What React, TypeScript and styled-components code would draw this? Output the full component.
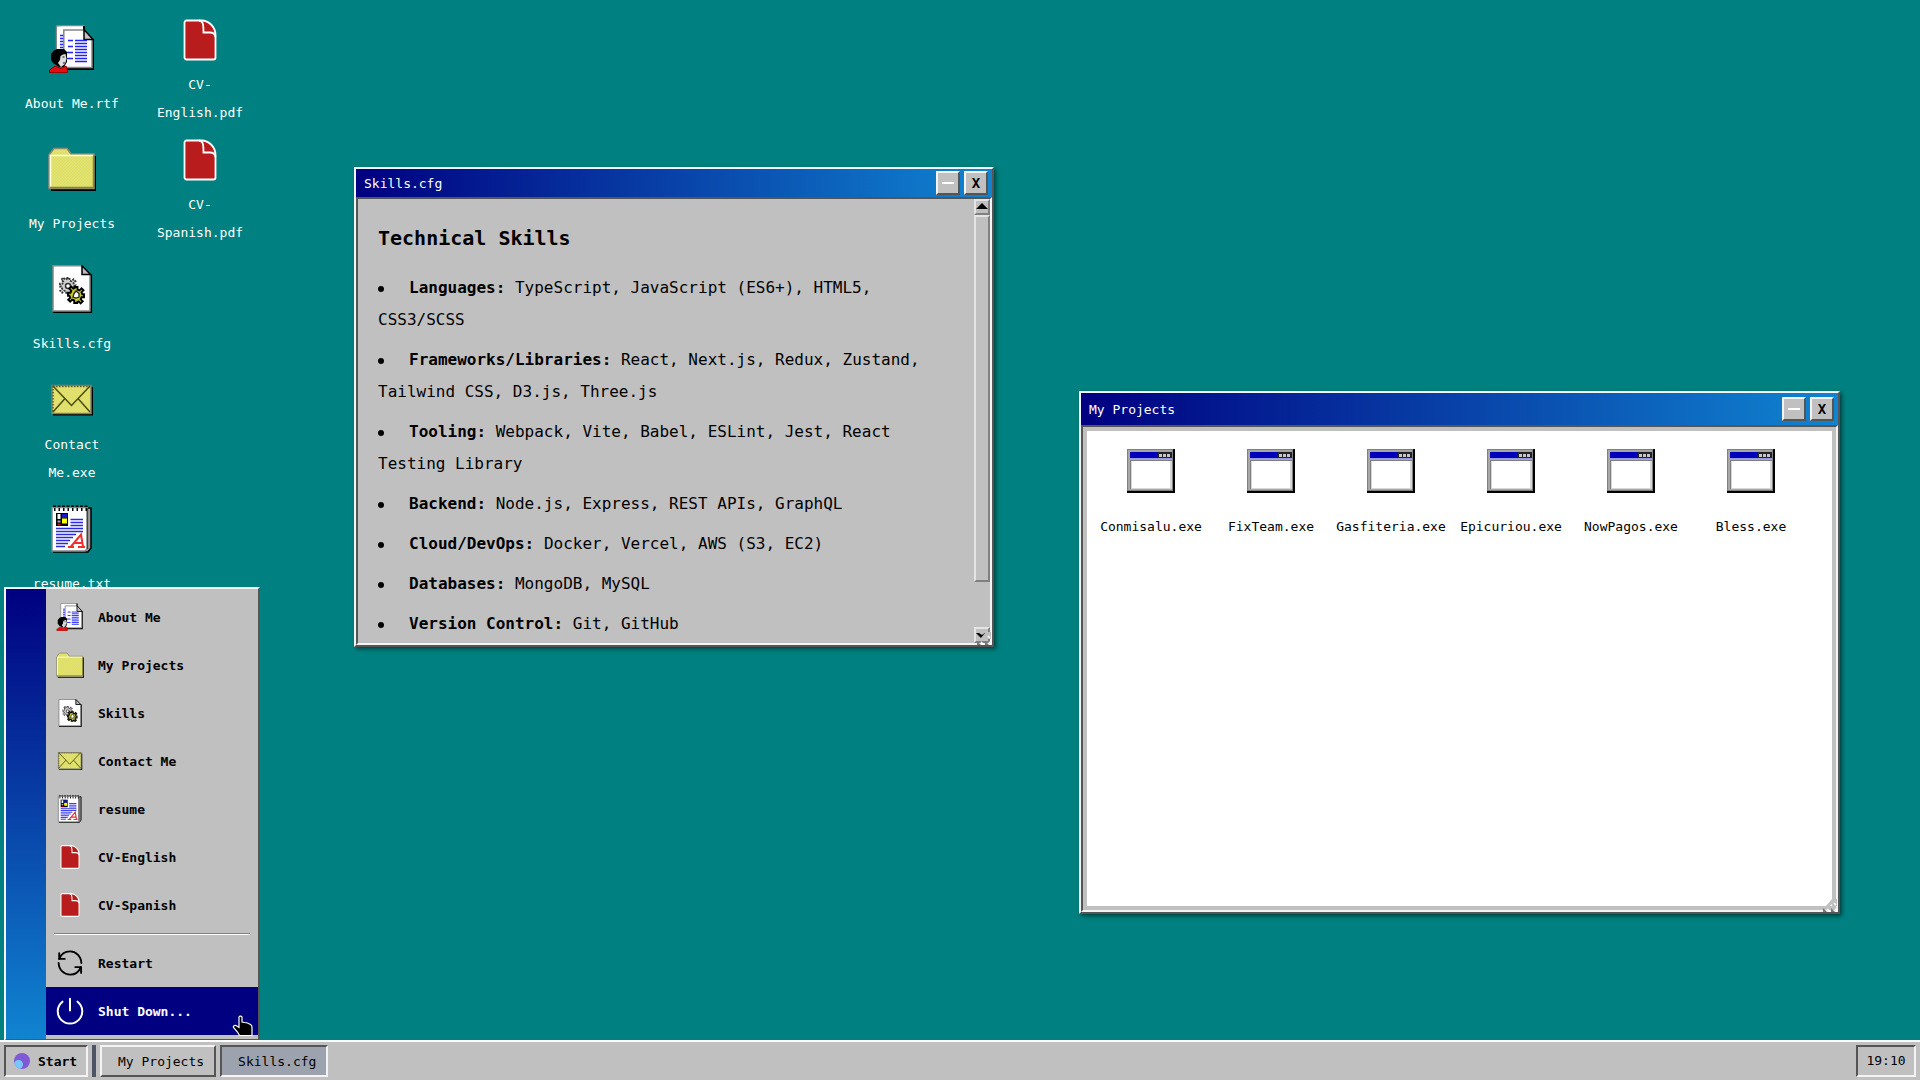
import React from "react";
import styled, { createGlobalStyle, css } from "styled-components";

const FONT = '"DejaVu Sans Mono", "Liberation Mono", monospace';

const GlobalStyle = createGlobalStyle`
  * { box-sizing: border-box; }
  body {
    margin: 0;
    overflow: hidden;
    background: #008080;
    font-family: ${FONT};
    color: #000;
  }
  button { font-family: inherit; color: inherit; margin: 0; padding: 0; }
  h1, h2, p, ul { margin: 0; padding: 0; }
`;

const raised = css`
  border: 2px solid;
  border-color: #f4f4f4 #555 #555 #f4f4f4;
`;

const sunken = css`
  border: 2px solid;
  border-color: #555 #f4f4f4 #f4f4f4 #555;
`;

/* ---------- icons ---------- */

type IconProps = { size: number };

const Svg = ({ size, children }: IconProps & { children: React.ReactNode }) => (
  <svg width={size} height={size} viewBox="0 0 48 48" aria-hidden="true">
    {children}
  </svg>
);

const Dither = ({ id }: { id: string }) => (
  <pattern id={id} width="3" height="3" patternUnits="userSpaceOnUse">
    <rect width="3" height="3" fill="#dede58" />
    <rect width="1.5" height="1.5" fill="#e2e280" />
    <rect x="1.5" y="1.5" width="1.5" height="1.5" fill="#e2e280" />
  </pattern>
);

const AboutIcon = ({ size }: IconProps) => (
  <Svg size={size}>
    <path d="M8.5 .8H36V6M8.5 .8V30" fill="#fff" stroke="#868686" strokeWidth="1.5" />
    <path d="M9 1.5H36V30H9z" fill="#fff" />
    <path d="M36 1V6" stroke="#000" strokeWidth="2" />
    <path d="M12 10.5h4M12 13.5h4M12 16.5h4M12 19.5h4M12 22.5h4" stroke="#22f" strokeWidth="1.5" />
    <path d="M18 44H45V14" fill="none" stroke="#000" strokeWidth="2" />
    <path d="M15.8 43V5H36L44 13.500V42.500H16z" fill="#fff" stroke="#868686" strokeWidth="1.5" />
    <path d="M36 4.500L45 14.500H36z" fill="#c4c4c4" stroke="#000" strokeWidth="1.5" />
    <path d="M20 15.500h5M20 21.500h5M19 27.500h6M19 33.500h6M27 15.500H39M27 18.500H39M27 21.500H39M27 24.500H39M27 27.500H39M27 30.500H39M27 33.500H39M27 36.500H39" stroke="#22f" strokeWidth="1.6" />
    <path d="M6 25.500L9 24H16L19 27V37L16 42H11L5 38L3 35V29z" fill="#000" />
    <path d="M12.500 31L15 29.500L17.500 29L18.500 34L17 39L13 42L10 38L12 35z" fill="#ddd" />
    <path d="M14.500 32h2M15 38h2" stroke="#555" strokeWidth="1.5" />
    <path d="M1.500 47.500V45L7 41L13 43.500L18 41L19.500 45V47.500z" fill="#e80c0c" stroke="#900" strokeWidth="1" />
  </Svg>
);

const FolderIcon = ({ size }: IconProps) => (
  <Svg size={size}>
    <defs><Dither id={`folder-${size}`} /></defs>
    <path d="M3 45H47V11" fill="none" stroke="#000" strokeWidth="2" />
    <path d="M1 43.500V10L6 3.500H19L23 9H46V43.500z" fill={`url(#folder-${size})`} stroke="#8b8b78" strokeWidth="1.500" />
    <path d="M2.500 42V10.500H45" fill="none" stroke="#ffffe0" strokeWidth="1.500" />
    <path d="M2 42.500H45.500V11" fill="none" stroke="#88882c" strokeWidth="1.500" />
  </Svg>
);

const GEAR = "M-1.500-8h3v2.500l2 .8 2-2 2 2-2 2 .8 2H8v3H5.500l-.8 2 2 2-2 2-2-2-1.500.8V8h-3V5.500l-2-.8-2 2-2-2 2-2-.8-2H-8v-3h2.500l.8-2-2-2 2-2 2 2 1.500-.8z";

const SkillsIcon = ({ size }: IconProps) => (
  <Svg size={size}>
    <path d="M5 47H43V9" fill="none" stroke="#000" strokeWidth="2.200" />
    <path d="M5 .8H34L42 9V46H5z" fill="#fff" stroke="#868686" strokeWidth="1.500" />
    <path d="M34 .8L42.500 9.500H34z" fill="#bbb" stroke="#000" strokeWidth="1.500" />
    <g transform="translate(20 21)">
      <path d={GEAR} fill="#d0d0d0" stroke="#333" strokeWidth="1.800" strokeDasharray="2 1" />
      <circle r="2.500" fill="#fff" stroke="#333" strokeWidth="1.500" />
    </g>
    <g transform="translate(28 30)">
      <path d={GEAR} fill="#c8c824" stroke="#000" strokeWidth="1.900" />
      <path d="M-2-1.500L0-4L3-1.500V2L0 3L-3 2z" fill="#fff" stroke="#222" strokeWidth="1.300" />
    </g>
  </Svg>
);

const MailIcon = ({ size }: IconProps) => (
  <Svg size={size}>
    <defs><Dither id={`mail-${size}`} /></defs>
    <path d="M5 39.500H45V11H42V38H5z" fill="#000" />
    <rect x="4" y="9.500" width="39" height="28" fill={`url(#mail-${size})`} stroke="#80806c" strokeWidth="1.500" />
    <path d="M5 10.500H42M5 10V36" fill="none" stroke="#57572a" strokeWidth="1.500" strokeDasharray="1.500 1.500" />
    <path d="M5 10L23.500 29.500L42 10M5 36L17 22.500M30 22.500L42 36" fill="none" stroke="#4c4c10" strokeWidth="1.500" />
  </Svg>
);

const ResumeIcon = ({ size }: IconProps) => (
  <Svg size={size}>
    <path d="M5 47H40L43 43V3H40" fill="#9a9a9a" stroke="#000" strokeWidth="1.500" />
    <path d="M4 2.500H39V44L37 46H4z" fill="#fff" stroke="#868686" strokeWidth="1.500" />
    <path d="M39.500 3V44" stroke="#444" strokeWidth="1.200" />
    <path d="M5 1.200H41" stroke="#000" strokeWidth="1.400" strokeDasharray="3 1.500" />
    <path d="M6 4.500H39" stroke="#000" strokeWidth="3" strokeDasharray="1.500 3" />
    <rect x="8" y="8" width="12" height="13" fill="#000" />
    <path d="M9.500 9h3v5h-3z" fill="#fff" />
    <path d="M14 9h5v4h-5z" fill="#1818c0" />
    <path d="M14 13.500h5v5h-5z" fill="#ff0" />
    <path d="M9.500 15.500h3v2h-3z" fill="#aaa" />
    <path d="M9.500 18.500h3v1.500h-3z" fill="#e01010" />
    <path d="M22.500 14.500H35M22.500 17.500H35M22.500 20.500H35M8 23.500H35M8 26.500H35M8 29.500H28M8 32.500H25M8 35.500H22M8 38.500H20M8 41.500H17" stroke="#2a2ae0" strokeWidth="1.600" />
    <path d="M20 42H26M30 42H37M23 41.500L33 29.500L35 41.500M25.500 38H34" fill="none" stroke="#f03030" strokeWidth="2" />
  </Svg>
);

const PdfIcon = ({ size }: IconProps) => (
  <Svg size={size}>
    <path d="M10.500 4.500H25.500C33 4.500 39.500 11 39.500 19V41.500a2 2 0 0 1-2 2H10.500a2 2 0 0 1-2-2V6.500a2 2 0 0 1 2-2z" fill="#b91c1c" stroke="#fff" strokeWidth="1.800" />
    <path d="M23 4.500C27 5 27.500 8 27.500 16.500H34C37.500 16.500 39 18 39.500 21" fill="none" stroke="#fff" strokeWidth="1.800" />
  </Svg>
);

const WindowIcon = ({ size }: IconProps) => (
  <Svg size={size}>
    <rect x="0" y="1" width="48" height="44" fill="#000" />
    <rect x="0" y="1" width="46" height="42" fill="#808080" />
    <rect x="1" y="2" width="44" height="40" fill="#a8a8a8" />
    <rect x="3" y="3" width="42" height="8" fill="#9a9ae0" />
    <rect x="3" y="4" width="42" height="6" fill="#0000b8" />
    <rect x="31" y="4" width="14" height="6" fill="#222" />
    <path d="M32 6h3v3h-3zM36 6h3v3h-3zM40 6h3v3h-3z" fill="#c8c8c8" />
    <rect x="3" y="12" width="42" height="29" fill="#808080" />
    <rect x="4" y="13" width="41" height="28" fill="#d8d8d8" />
    <rect x="5" y="13" width="38" height="27" fill="#fff" />
  </Svg>
);

const RestartIcon = ({ size }: IconProps) => (
  <Svg size={size}>
    <g fill="none" stroke="currentColor" strokeWidth="3.200" strokeLinecap="round" strokeLinejoin="round">
      <path d="M5.500 17C9 8 16 4 24 4C34 4 43 12 43.500 24" />
      <path d="M4.500 24C5 36 14 44 24 44C32 44 39 40 42.500 31" />
      <path d="M5.500 7V17H15M43 41V31H33" />
    </g>
  </Svg>
);

const PowerIcon = ({ size }: IconProps) => (
  <Svg size={size}>
    <g fill="none" stroke="currentColor" strokeWidth="3.400" strokeLinecap="round">
      <path d="M24 3V23" />
      <path d="M11 8A21 21 0 1 0 37 8" />
    </g>
  </Svg>
);

const HandCursor = () => (
  <svg width="22" height="22" viewBox="0 0 22 22" aria-hidden="true">
    <path d="M7 2C7.500 .8 9.500 .8 10 2V7L12.500 7.500L15.500 8L18.500 9.500C19.500 10 20 11 20 12.500V20.500H7.500L5.500 17L1.500 12.500C1 11 2.500 10 4 10.500L7 12.500z" fill="#000" stroke="#fff" strokeWidth="1.200" />
  </svg>
);

/* ---------- desktop ---------- */

const Screen = styled.div`
  height: 100vh;
  display: flex;
  flex-direction: column;
`;

const Desktop = styled.main`
  position: relative;
  flex: 1;
  min-height: 0;
`;

const IconGrid = styled.div`
  display: grid;
  grid-auto-flow: column;
  grid-template-rows: repeat(5, 120px);
  grid-auto-columns: 128px;
  padding: 8px;
`;

const Tile = styled.button<{ $dark?: boolean }>`
  width: ${(p) => (p.$dark ? 120 : 128)}px;
  height: 127px;
  display: flex;
  flex-direction: column;
  align-items: center;
  justify-content: space-evenly;
  border: 0;
  background: none;
  color: ${(p) => (p.$dark ? "#000" : "#fff")};
  font-size: 13px;
  line-height: 28px;
`;

const TileLabel = styled.span<{ $wide?: boolean }>`
  max-width: ${(p) => (p.$wide ? "none" : "104px")};
  text-align: center;
`;

/* ---------- windows ---------- */

const WindowFrame = styled.section<{ $x: number; $y: number; $w: number; $h: number }>`
  position: absolute;
  left: ${(p) => p.$x}px;
  top: ${(p) => p.$y}px;
  width: ${(p) => p.$w}px;
  height: ${(p) => p.$h}px;
  display: flex;
  flex-direction: column;
  background: #c0c0c0;
  box-shadow: 2px 2px 4px rgba(0, 0, 0, 0.5);
  ${raised}
`;

const TitleBar = styled.header<{ $tall?: boolean }>`
  flex: none;
  height: ${(p) => (p.$tall ? 32 : 28)}px;
  display: flex;
  align-items: center;
  gap: 4px;
  padding: 0 4px 0 8px;
  background: linear-gradient(90deg, #000080, #1084d0);
  color: #fff;
`;

const Title = styled.h1`
  flex: 1;
  padding-top: 2px;
  font-size: 13px;
  font-weight: 400;
  line-height: 24px;
`;

const ControlButton = styled.button`
  width: 24px;
  height: 24px;
  display: grid;
  place-items: center;
  background: #c0c0c0;
  color: #000;
  font-size: 14px;
  font-weight: 700;
  line-height: 20px;
  ${raised}
`;

const MinimizeBar = styled.span`
  width: 12px;
  height: 2px;
  background: #fff;
`;

const WindowBody = styled.div`
  flex: 1;
  min-height: 0;
  display: flex;
  ${sunken}
`;

const FolderView = styled.div`
  flex: 1;
  margin: 4px;
  padding: 0 4px;
  background: #fff;
  display: flex;
  flex-wrap: wrap;
  align-content: flex-start;
`;

const Document = styled.article`
  flex: 1;
  overflow: hidden;
  padding: 21px 20px;
`;

const Heading = styled.h2`
  margin-bottom: 16px;
  font-size: 20px;
  line-height: 36px;
`;

const SkillList = styled.ul`
  display: flex;
  flex-direction: column;
  gap: 8px;
  list-style: none;
  font-size: 16px;
  line-height: 32px;
`;

const Skill = styled.li`
  &::before {
    content: "";
    display: inline-block;
    width: 6px;
    height: 6px;
    margin-right: 25px;
    border-radius: 50%;
    background: #000;
    vertical-align: middle;
  }
`;

const ScrollBar = styled.div`
  flex: none;
  width: 16px;
  display: flex;
  flex-direction: column;
`;

const ScrollPart = css`
  background: #c0c0c0;
  border: 2px solid;
  border-color: #e4e4e4 #808080 #808080 #e4e4e4;
`;

const ScrollButton = styled.button`
  flex: none;
  height: 16px;
  display: grid;
  place-items: center;
  ${ScrollPart}
`;

const ScrollTrack = styled.div`
  flex: 1;
`;

const ScrollThumb = styled.div`
  height: 89%;
  ${ScrollPart}
`;

const Grip = styled.svg`
  position: absolute;
  right: -1px;
  bottom: 0;
`;

/* ---------- start menu ---------- */

const StartMenu = styled.nav`
  position: absolute;
  left: 4px;
  bottom: -1px;
  width: 256px;
  display: flex;
  background: #c0c0c0;
  ${raised}
`;

const MenuStripe = styled.div`
  width: 40px;
  background: linear-gradient(180deg, #000080, #1084d0);
`;

const MenuItems = styled.div`
  flex: 1;
  display: flex;
  flex-direction: column;
  padding: 4px 0;
`;

const MenuItem = styled.button<{ $active?: boolean }>`
  height: 48px;
  display: flex;
  align-items: center;
  gap: 14px;
  padding: 0 10px;
  border: 0;
  background: ${(p) => (p.$active ? "#000080" : "none")};
  color: ${(p) => (p.$active ? "#fff" : "#000")};
  font-size: 13px;
  font-weight: 700;
`;

const MenuDivider = styled.hr`
  width: 196px;
  height: 2px;
  margin: 4px 8px;
  border: 0;
  border-top: 1px solid #808080;
  border-bottom: 1px solid #fff;
`;

const Pointer = styled.div`
  position: absolute;
  right: 4px;
  bottom: 2px;
  height: 22px;
`;

/* ---------- taskbar ---------- */

const TaskBar = styled.footer`
  position: relative;
  flex: none;
  height: 40px;
  display: flex;
  align-items: center;
  gap: 4px;
  padding: 0 4px;
  background: #c0c0c0;
  border-top: 2px solid #fff;
  font-size: 13px;
`;

const StartButton = styled.button`
  width: 84px;
  height: 32px;
  display: flex;
  align-items: center;
  gap: 8px;
  padding: 0 8px;
  background: #c0c0c0;
  font-size: 13px;
  font-weight: 700;
  ${sunken}
`;

const TaskDivider = styled.div`
  width: 4px;
  height: 32px;
  background: #4b5563;
`;

const TaskButton = styled.button<{ $active?: boolean }>`
  height: 32px;
  padding: 0 10px 0 16px;
  font-size: 13px;
  background: ${(p) => (p.$active ? "#9ca3af" : "#c0c0c0")};
  ${(p) => (p.$active ? sunken : raised)}
`;

const Clock = styled.time`
  height: 32px;
  width: 60px;
  margin-left: auto;
  line-height: 28px;
  text-align: center;
  ${sunken}
`;

/* ---------- data ---------- */

type Entry = { label: string; Icon: React.FC<IconProps> };

const desktopItems: Entry[] = [
  { label: "About Me.rtf", Icon: AboutIcon },
  { label: "My Projects", Icon: FolderIcon },
  { label: "Skills.cfg", Icon: SkillsIcon },
  { label: "Contact Me.exe", Icon: MailIcon },
  { label: "resume.txt", Icon: ResumeIcon },
  { label: "CV-English.pdf", Icon: PdfIcon },
  { label: "CV-Spanish.pdf", Icon: PdfIcon },
];

const menuItems: Entry[] = [
  { label: "About Me", Icon: AboutIcon },
  { label: "My Projects", Icon: FolderIcon },
  { label: "Skills", Icon: SkillsIcon },
  { label: "Contact Me", Icon: MailIcon },
  { label: "resume", Icon: ResumeIcon },
  { label: "CV-English", Icon: PdfIcon },
  { label: "CV-Spanish", Icon: PdfIcon },
];

const projects = [
  "Conmisalu.exe",
  "FixTeam.exe",
  "Gasfiteria.exe",
  "Epicuriou.exe",
  "NowPagos.exe",
  "Bless.exe",
];

const skills = [
  ["Languages:", "TypeScript, JavaScript (ES6+), HTML5, CSS3/SCSS"],
  ["Frameworks/Libraries:", "React, Next.js, Redux, Zustand, Tailwind CSS, D3.js, Three.js"],
  ["Tooling:", "Webpack, Vite, Babel, ESLint, Jest, React Testing Library"],
  ["Backend:", "Node.js, Express, REST APIs, GraphQL"],
  ["Cloud/DevOps:", "Docker, Vercel, AWS (S3, EC2)"],
  ["Databases:", "MongoDB, MySQL"],
  ["Version Control:", "Git, GitHub"],
];

type WindowProps = {
  title: string;
  x: number;
  y: number;
  w: number;
  h: number;
  tall?: boolean;
  children: React.ReactNode;
};

const AppWindow = ({ title, x, y, w, h, tall, children }: WindowProps) => (
  <WindowFrame $x={x} $y={y} $w={w} $h={h} aria-label={title}>
    <TitleBar $tall={tall}>
      <Title>{title}</Title>
      <ControlButton aria-label="Minimize"><MinimizeBar /></ControlButton>
      <ControlButton aria-label="Close">X</ControlButton>
    </TitleBar>
    <WindowBody>{children}</WindowBody>
    <Grip width="17" height="16" viewBox="0 0 17 16" aria-hidden="true">
      <path d="M4 10L10 3H15V10H12V8H10L8 10z" fill="#c0c0c0" />
      <path d="M1 12L5 16H1zM9 12L13 16H9z" fill="#777" />
      <path d="M5 13L8 16M13 13L15 15M12 7L14 9" stroke="#fff" strokeWidth="1.500" />
    </Grip>
  </WindowFrame>
);

export default function App() {
  return (
    <Screen>
      <GlobalStyle />
      <Desktop>
        <IconGrid>
          {desktopItems.map(({ label, Icon }) => (
            <Tile key={label}>
              <Icon size={48} />
              <TileLabel>{label}</TileLabel>
            </Tile>
          ))}
        </IconGrid>

        <AppWindow title="Skills.cfg" x={354} y={167} w={640} h={480}>
          <Document>
            <Heading>Technical Skills</Heading>
            <SkillList>
              {skills.map(([name, list]) => (
                <Skill key={name}>
                  <strong>{name}</strong> {list}
                </Skill>
              ))}
            </SkillList>
          </Document>
          <ScrollBar>
            <ScrollButton aria-label="Scroll up">
              <svg width="12" height="8" viewBox="0 0 12 8" aria-hidden="true"><path d="M0 6L6 0L12 6z" /></svg>
            </ScrollButton>
            <ScrollTrack><ScrollThumb /></ScrollTrack>
            <ScrollButton aria-label="Scroll down">
              <svg width="12" height="8" viewBox="0 0 12 8" aria-hidden="true"><path d="M0 2L6 8L12 2L9 2L6 4L3 2z" /></svg>
            </ScrollButton>
          </ScrollBar>
        </AppWindow>

        <AppWindow title="My Projects" x={1079} y={391} w={761} h={523} tall>
          <FolderView>
            {projects.map((name) => (
              <Tile key={name} $dark>
                <WindowIcon size={48} />
                <TileLabel $wide>{name}</TileLabel>
              </Tile>
            ))}
          </FolderView>
        </AppWindow>

        <StartMenu aria-label="Start menu">
          <MenuStripe />
          <MenuItems>
            {menuItems.map(({ label, Icon }) => (
              <MenuItem key={label}>
                <Icon size={28} />
                {label}
              </MenuItem>
            ))}
            <MenuDivider />
            <MenuItem><RestartIcon size={28} />Restart</MenuItem>
            <MenuItem $active><PowerIcon size={28} />Shut Down...</MenuItem>
          </MenuItems>
          <Pointer><HandCursor /></Pointer>
        </StartMenu>
      </Desktop>

      <TaskBar>
        <StartButton>
          <svg width="16" height="16" viewBox="0 0 16 16" aria-hidden="true">
            <circle cx="8" cy="8" r="8" fill="#805ad5" />
            <path d="M0.300 10A4.500 4.500 0 1 1 6 15.750A8 8 0 0 1 .3 10z" fill="#76c8fb" />
          </svg>
          Start
        </StartButton>
        <TaskDivider />
        <TaskButton>My Projects</TaskButton>
        <TaskButton $active>Skills.cfg</TaskButton>
        <Clock>19:10</Clock>
      </TaskBar>
    </Screen>
  );
}
